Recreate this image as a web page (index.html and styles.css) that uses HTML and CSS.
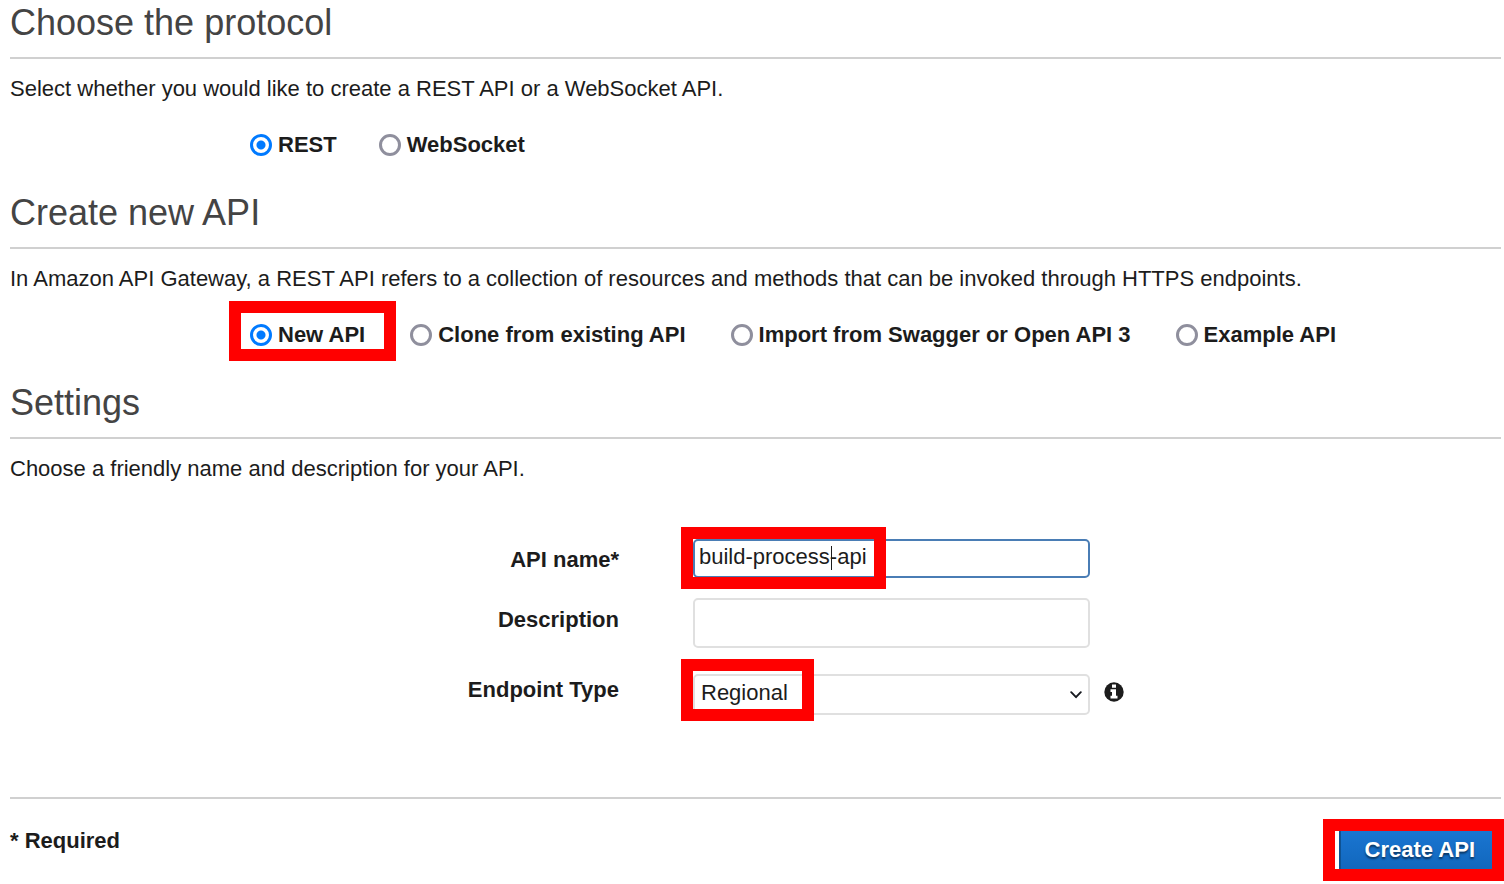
FILE: index.html
```html
<!DOCTYPE html>
<html lang="en">
<head>
<meta charset="utf-8">
<title>Create API</title>
<link rel="stylesheet" href="styles.css">
</head>
<body>
<form class="page">
  <section class="section">
    <h2 class="section-title">Choose the protocol</h2>
    <p class="section-text">Select whether you would like to create a REST API or a WebSocket API.</p>
    <div class="radio-row">
      <label class="radio"><input type="radio" name="protocol" checked>REST</label>
      <label class="radio"><input type="radio" name="protocol">WebSocket</label>
    </div>
  </section>

  <section class="section">
    <h2 class="section-title">Create new API</h2>
    <p class="section-text">In Amazon API Gateway, a REST API refers to a collection of resources and methods that can be invoked through HTTPS endpoints.</p>
    <div class="radio-row radio-row-wide">
      <label class="radio"><input type="radio" name="source" checked>New API<span class="mark mark-radio"></span></label>
      <label class="radio"><input type="radio" name="source">Clone from existing API</label>
      <label class="radio"><input type="radio" name="source">Import from Swagger or Open API 3</label>
      <label class="radio"><input type="radio" name="source">Example API</label>
    </div>
  </section>

  <section class="section">
    <h2 class="section-title">Settings</h2>
    <p class="section-text">Choose a friendly name and description for your API.</p>
    <div class="fields">
      <label class="field-label" for="api-name">API name*</label>
      <div class="control">
        <input class="box box-name" id="api-name" type="text" value="build-process-api">
        <span class="caret"></span>
        <span class="mark mark-name"></span>
      </div>

      <label class="field-label label-description" for="description">Description</label>
      <div class="control control-description">
        <input class="box box-description" id="description" type="text">
      </div>

      <label class="field-label label-endpoint" for="endpoint">Endpoint Type</label>
      <div class="control control-endpoint">
        <select class="box box-endpoint" id="endpoint">
          <option>Regional</option>
        </select>
        <svg class="chevron" width="12" height="8" viewBox="0 0 12 8"><path d="M1.2 1.2 6 6.2l4.800-5" fill="none" stroke="#16191f" stroke-width="1.900" stroke-linecap="round" stroke-linejoin="round"/></svg>
        <span class="mark mark-endpoint"></span>
      </div>
      <svg class="info" width="20" height="20" viewBox="0 0 20 20" role="img" aria-label="Info"><circle cx="10" cy="10" r="9.700" fill="#1c1c1c"/><path d="M8 2.500h4v3.200H8zM6.500 7.200H12v6.600h1.500v2.700h-7v-2.700H8V9.900H6.500z" fill="#fff"/></svg>
    </div>
  </section>

  <footer class="footer">
    <span class="required">* Required</span>
    <div class="submit">
      <button class="create" type="button">Create API</button>
      <span class="mark mark-create"></span>
    </div>
  </footer>
</form>
</body>
</html>
```
FILE: styles.css
```css
* {
  box-sizing: border-box;
}

body {
  margin: 0;
  background: #fff;
  color: #1c1c1c;
  font: 22px/30px "Liberation Sans", Arial, sans-serif;
}

.page {
  padding: 0 3px 0 10px;
}

.section-title {
  margin: 0;
  padding-bottom: 11px;
  border-bottom: 2px solid #d0d0d0;
  color: #444;
  font-size: 36px;
  font-weight: 400;
  line-height: 46px;
}

.section-text {
  margin: 15px 0 0;
}

.radio-row {
  display: flex;
  flex-wrap: wrap;
  gap: 0 42px;
  padding: 26px 0 30px 240px;
}

.radio-row-wide {
  column-gap: 45px;
}

.radio {
  position: relative;
  display: flex;
  align-items: center;
  gap: 6px;
  font-weight: 700;
}

.radio input {
  appearance: none;
  width: 22px;
  height: 22px;
  margin: 0;
  border: 3px solid #8f8f9d;
  border-radius: 50%;
  background: #fff;
}

.radio input:checked {
  border-color: #007aff;
  background: radial-gradient(circle, #007aff 4px, #fff 5px);
}

/* Red highlight frames drawn over the controls */
.mark {
  position: absolute;
  border: 12px solid #f00;
  pointer-events: none;
}

.mark-radio {
  inset: -19px -31px -11px -21px;
}

.mark-name {
  top: -12px;
  left: -12px;
  width: 205px;
  height: 62px;
}

.mark-endpoint {
  top: -15px;
  left: -12px;
  width: 133px;
  height: 62px;
}

.mark-create {
  inset: -8px -3px -6px -16px;
}

.fields {
  display: grid;
  grid-template-columns: 609fr 74px 397fr 14px 397fr;
  align-items: start;
  padding: 55px 0 82px;
}

.field-label {
  grid-column: 1;
  padding-top: 6px;
  font-weight: 700;
  text-align: right;
}

.control {
  position: relative;
  grid-column: 3;
  display: flex;
}

.box {
  appearance: none;
  width: 100%;
  margin: 0;
  padding: 0 5px;
  border: 2px solid #e0e0e0;
  border-radius: 5px;
  background: #fff;
  color: inherit;
  font: inherit;
}

.box:focus {
  outline: none;
}

.box-name {
  height: 39px;
  padding: 0 4px 4px;
  border-color: #4a7db5;
}

.caret {
  position: absolute;
  top: 7px;
  left: 138px;
  width: 1px;
  height: 24px;
  background: #1c1c1c;
}

.label-description,
.control-description {
  margin-top: 20px;
}

.label-description {
  padding-top: 7px;
}

.box-description {
  height: 50px;
}

.label-endpoint,
.control-endpoint {
  margin-top: 26px;
}

.label-endpoint {
  padding-top: 1px;
}

.box-endpoint {
  height: 41px;
  padding: 0 6px 4px;
}

.chevron {
  position: absolute;
  top: 17px;
  right: 8px;
  pointer-events: none;
}

.info {
  grid-column: 5;
  margin-top: 34px;
}

.footer {
  display: flex;
  justify-content: space-between;
  align-items: flex-start;
  border-top: 2px solid #d0d0d0;
}

.required {
  padding-top: 27px;
  font-weight: 700;
}

.submit {
  position: relative;
  margin: 28px 0 8px;
}

.create {
  display: block;
  height: 48px;
  padding: 0 24px 3px;
  border: 2px solid #0f5292;
  border-radius: 4px;
  background: linear-gradient(#1a76d2, #1166bb);
  color: #fff;
  font: inherit;
  font-weight: 700;
  text-shadow: 0 2px 2px #0a3560;
}
```
